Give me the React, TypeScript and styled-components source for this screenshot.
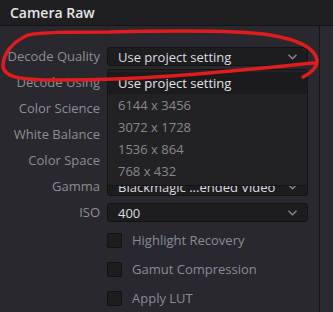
import React from "react";
import styled, { createGlobalStyle } from "styled-components";

const GlobalStyle = createGlobalStyle`
    html, body {
        margin: 0;
        padding: 0;
        background: #28282e;
    }
    body {
        font-family: "Open Sans", "Liberation Sans", sans-serif;
    }
`;

const Root = styled.div`
    position: relative;
    width: 333px;
    height: 312px;
    overflow: hidden;
    display: flex;
    flex-direction: column;
    background: #28282e;
`;

const Header = styled.div`
    height: 25px;
    flex: none;
    display: flex;
    align-items: center;
    padding-left: 10px;
    background: #1f1f22;
    border-bottom: 1px solid #141416;
`;

const Title = styled.span`
    font-size: 14px;
    font-weight: 600;
    color: #e6e6e8;
`;

const Body = styled.div`
    flex: 1;
    display: flex;
`;

const Panel = styled.div`
    position: relative;
    width: 319px;
    padding-top: 21px;
`;

const Divider = styled.div`
    width: 1px;
    background: #17171a;
`;

const Side = styled.div`
    flex: 1;
    background: #29292f;
`;

const Form = styled.div`
    display: grid;
    grid-template-columns: 100px 201px;
    column-gap: 7px;
    row-gap: 7px;
    align-items: center;
`;

const Label = styled.div`
    text-align: right;
    font-size: 13px;
    color: #8e8e94;
    white-space: nowrap;
    line-height: 19px;
`;

const Select = styled.div`
    box-sizing: border-box;
    height: 19px;
    display: flex;
    align-items: center;
    padding: 0 10px 0 10px;
    background: #1d1d20;
    border: 1px solid #131315;
    border-radius: 3px;
`;

const SelectText = styled.span`
    flex: 1;
    font-size: 13px;
    color: #dcdce0;
    white-space: nowrap;
    overflow: hidden;
`;

const Checks = styled.div`
    display: flex;
    flex-direction: column;
    gap: 7px;
    margin-top: 7px;
    padding-left: 107px;
`;

const CheckRow = styled.label`
    height: 22px;
    display: flex;
    align-items: center;
    gap: 10px;
    font-size: 13px;
    color: #8a8c96;
`;

const Box = styled.span`
    box-sizing: border-box;
    width: 15px;
    height: 15px;
    background: #1d1d20;
    border: 1px solid #121214;
    border-radius: 2px;
`;

const Menu = styled.div`
    position: absolute;
    left: 107px;
    top: 43px;
    width: 201px;
    height: 117px;
    box-sizing: border-box;
    padding-top: 2px;
    background: #222225;
    border: 1px solid #151517;
    border-radius: 2px;
`;

const Item = styled.div<{ $active?: boolean }>`
    height: 22px;
    display: flex;
    align-items: center;
    padding-left: 10px;
    font-size: 13px;
    color: ${(p) => (p.$active ? "#e4e4e8" : "#88888e")};
    background: ${(p) => (p.$active ? "#1b1b1d" : "transparent")};
`;

const Ink = styled.svg`
    position: absolute;
    left: 0;
    top: 0;
    pointer-events: none;
`;

const Chevron = () => (
    <svg width="9" height="6" viewBox="0 0 9 6">
        <polyline points="0.5,0.8 4.5,4.8 8.5,0.8" fill="none" stroke="#8a8a90" strokeWidth="1.3" />
    </svg>
);

// rows under the open menu show no value in the shot
const fields = [
    { label: "Decode Quality", value: "Use project setting" },
    { label: "Decode Using", value: "" },
    { label: "Color Science", value: "" },
    { label: "White Balance", value: "" },
    { label: "Color Space", value: "" },
    { label: "Gamma", value: "Blackmagic ...ended Video" },
    { label: "ISO", value: "400" },
];

const options = ["Use project setting", "6144 x 3456", "3072 x 1728", "1536 x 864", "768 x 432"];

const checks = ["Highlight Recovery", "Gamut Compression", "Apply LUT"];

export default function App() {
    return (
        <Root>
            <GlobalStyle />
            <Header>
                <Title>Camera Raw</Title>
            </Header>
            <Body>
                <Panel>
                    <Form>
                        {fields.map((f) => (
                            <React.Fragment key={f.label}>
                                <Label>{f.label}</Label>
                                <Select>
                                    <SelectText>{f.value}</SelectText>
                                    <Chevron />
                                </Select>
                            </React.Fragment>
                        ))}
                    </Form>
                    <Checks>
                        {checks.map((c) => (
                            <CheckRow key={c}>
                                <Box />
                                {c}
                            </CheckRow>
                        ))}
                    </Checks>
                    <Menu>
                        {options.map((o, i) => (
                            <Item key={o} $active={i === 0}>{o}</Item>
                        ))}
                    </Menu>
                </Panel>
                <Divider />
                <Side />
            </Body>
            {/* red marker scribble round the first row */}
            <Ink width="333" height="312" viewBox="0 0 333 312">
                <path
                    d="M 303 77 Q 318 69 317 60 C 315 48 300 40 270 35 C 232 29 150 31 110 32 C 70 32 40 32 28 35 C 12 42 3 54 3 66 C 4 77 18 80 60 80 C 150 80 220 72 314 63"
                    fill="none"
                    stroke="#e01c1c"
                    strokeWidth="3.5"
                    strokeLinecap="round"
                    strokeLinejoin="round"
                />
            </Ink>
        </Root>
    );
}
